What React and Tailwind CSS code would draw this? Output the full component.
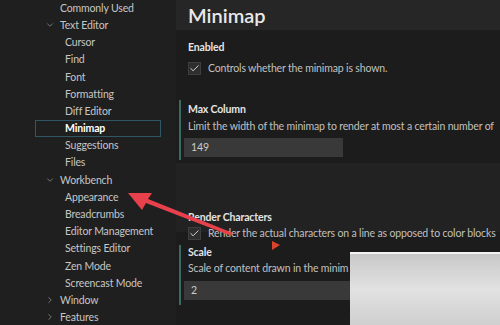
import { ChevronDown, ChevronRight, Check } from 'lucide-react';

const tocItems = [
  { label: 'Commonly Used', level: 0 },
  { label: 'Text Editor', level: 0, open: true },
  { label: 'Cursor', level: 1 },
  { label: 'Find', level: 1 },
  { label: 'Font', level: 1 },
  { label: 'Formatting', level: 1 },
  { label: 'Diff Editor', level: 1 },
  { label: 'Minimap', level: 1, selected: true },
  { label: 'Suggestions', level: 1 },
  { label: 'Files', level: 1 },
  { label: 'Workbench', level: 0, open: true },
  { label: 'Appearance', level: 1 },
  { label: 'Breadcrumbs', level: 1 },
  { label: 'Editor Management', level: 1 },
  { label: 'Settings Editor', level: 1 },
  { label: 'Zen Mode', level: 1 },
  { label: 'Screencast Mode', level: 1 },
  { label: 'Window', level: 0, open: false },
  { label: 'Features', level: 0, open: false },
];

const TocRow = ({ item }) => {
  const hasChevron = item.open !== undefined;
  return (
    <div
      className={`h-[17.2px] flex items-center ${
        item.selected ? 'border border-[#2f5663] ml-[35px] mr-[15px] pl-[29px]' : item.level ? 'pl-[65px]' : 'pl-[45px]'
      }`}
    >
      {!item.selected && item.level === 0 && (
        <span className="w-[15px] flex items-center text-[#a8a8a8]">
          {hasChevron && (item.open ? <ChevronDown size={10} strokeWidth={1.5} /> : <ChevronRight size={10} strokeWidth={1.5} />)}
        </span>
      )}
      <span className={item.selected ? 'text-white font-bold' : 'text-[#c6c6c6]'}>{item.label}</span>
    </div>
  );
};

const CheckBox = () => (
  <span className="w-[13px] h-[13px] shrink-0 bg-[#2e2e2e] border border-[#3e3e3e] flex items-center justify-center text-[#e0e0e0]">
    <Check size={11} strokeWidth={2} />
  </span>
);

const App = () => {
  return (
    <div
      className="relative w-[500px] h-[325px] overflow-hidden flex bg-[#1c1c1c] text-[10.5px] tracking-[-0.15px] leading-none"
      style={{ fontFamily: 'Lato, "Noto Sans", sans-serif' }}
    >
      {/* table of contents */}
      <div className="w-[176px] shrink-0 bg-[#1f1f1f] -mt-[0.6px]">
        {tocItems.map((item) => (
          <TocRow key={item.label} item={item} />
        ))}
      </div>

      {/* settings list */}
      <div className="flex-1 min-w-0 flex flex-col">
        <div className="h-[30px] bg-[#262626] flex items-center pl-3">
          <span className="text-[20px] tracking-normal font-semibold text-[#e8e8e8]">Minimap</span>
        </div>

        <div className="pl-3 pt-[12px] h-[70px]">
          <div className="font-bold text-[#e4e4e4] h-[10px]">Enabled</div>
          <div className="flex items-center gap-[7px] mt-[10px]">
            <CheckBox />
            <span className="text-[#c0c0c0]">Controls whether the minimap is shown.</span>
          </div>
        </div>

        <div className="ml-[3px] border-l-2 border-[#3b6b60] pl-[7px] h-[60px] pt-[3px]">
          <div className="font-bold text-[#e4e4e4] h-[10px] mt-[1px]">Max Column</div>
          <div className="text-[#c0c0c0] whitespace-nowrap mt-[7px]">
            Limit the width of the minimap to render at most a certain number of
          </div>
          <div className="-ml-[4px] mt-[6px] w-[159px] h-[19px] bg-[#393939] flex items-center pl-[7px] text-[#cccccc]">149</div>
        </div>

        <div className="mt-[3px] h-[69px] bg-[#222222] pl-3 pt-[49px]">
          <div className="font-bold text-[#e4e4e4] h-[10px]">Render Characters</div>
          <div className="flex items-center gap-[7px] mt-[5px] whitespace-nowrap">
            <CheckBox />
            <span className="text-[#c0c0c0]">Render the actual characters on a line as opposed to color blocks</span>
          </div>
        </div>

        <div className="ml-[3px] mt-[13px] border-l-2 border-[#3b6b60] pl-[7px] h-[60px] pt-[2px]">
          <div className="font-bold text-[#e4e4e4] h-[10px]">Scale</div>
          <div className="text-[#c0c0c0] whitespace-nowrap mt-[6px]">Scale of content drawn in the minim</div>
          <div className="-ml-[4px] mt-[7px] w-[300px] h-[19px] bg-[#393939] flex items-center pl-[7px] text-[#cccccc]">2</div>
        </div>
      </div>

      {/* annotation arrow */}
      <svg className="absolute left-0 top-0 pointer-events-none" width="500" height="325">
        <polygon points="128,193 152,193 148,199 233,233 229,235 146,203 142,210" fill="#e8414b" />
        <polygon points="272,241 280,245 272,250" fill="#d9432c" />
      </svg>

      {/* watermark */}
      <div className="absolute left-[350px] top-[252px] w-[150px] h-[73px] border-t-2 border-[#f4f4f4] bg-gradient-to-b from-[#c8c8c8] via-[#e2e2e2] to-[#cfcfcf]" />
    </div>
  );
};

export default App;
